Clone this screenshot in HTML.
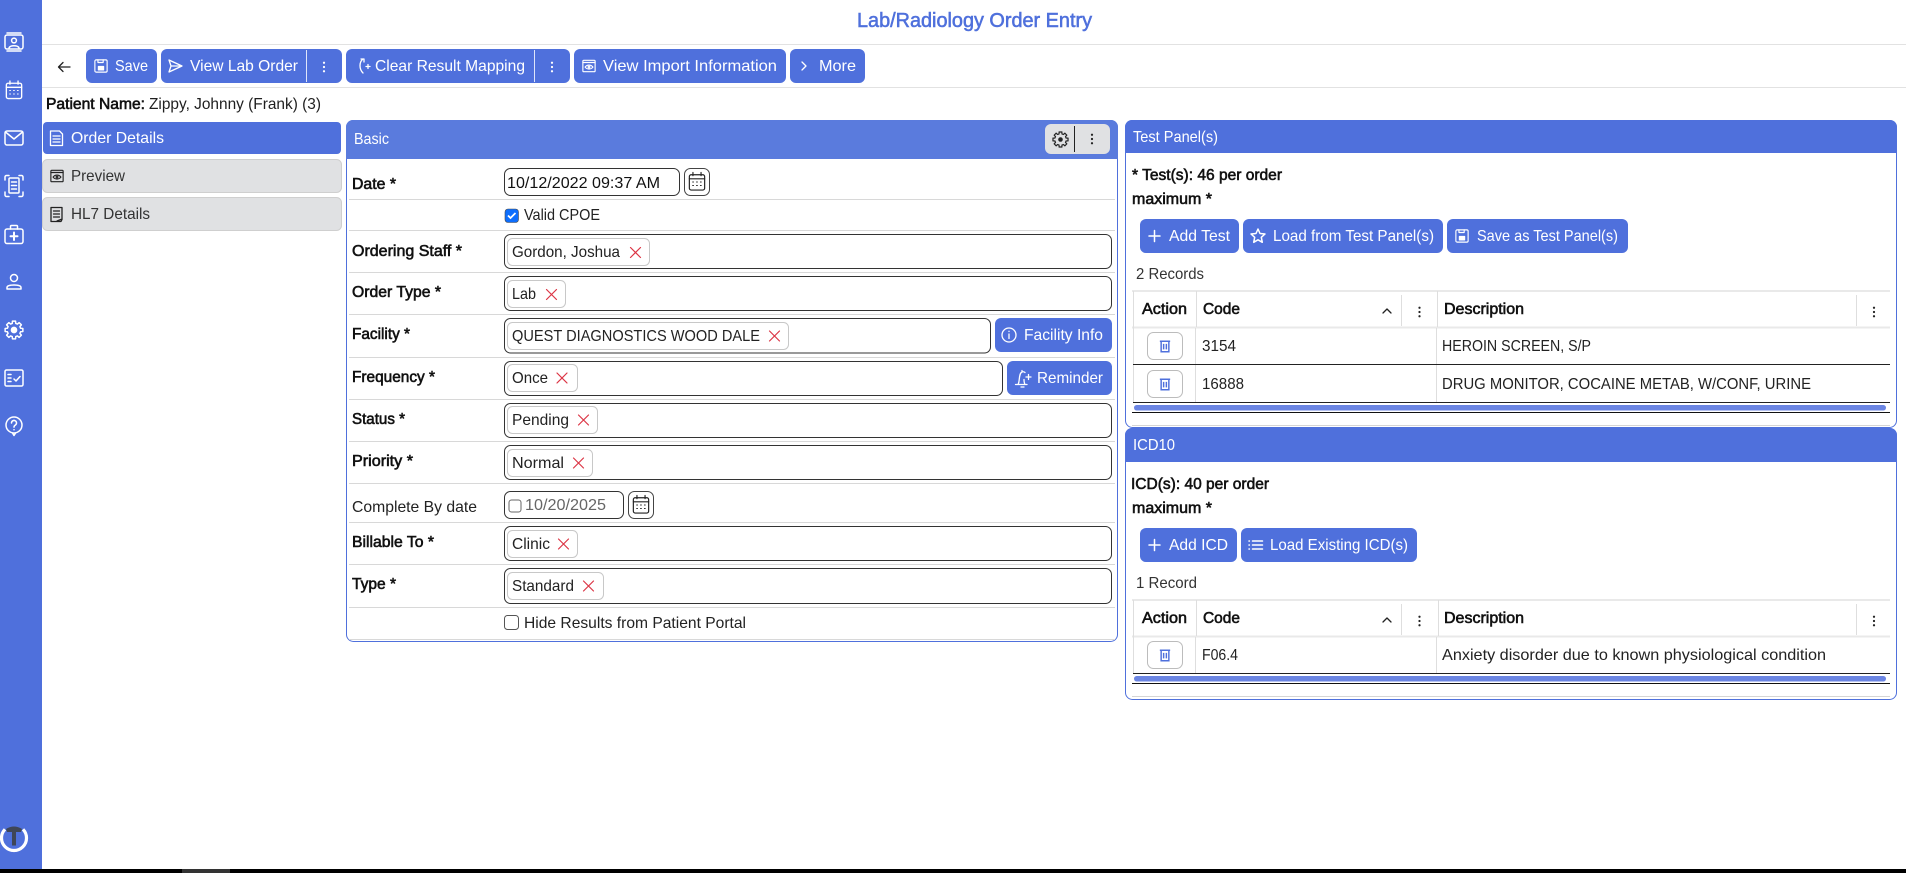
<!DOCTYPE html>
<html lang="en"><head><meta charset="utf-8"><title>Lab/Radiology Order Entry</title>
<style>
html,body{margin:0;padding:0;background:#fff;width:1906px;height:873px;overflow:hidden}
svg{display:block}
text{font-family:"Liberation Sans",Arial,sans-serif;font-size:16px;fill:#222}
.w{fill:#fff}
.b{fill:#111;stroke:#111;stroke-width:.6px}
.t{fill:#1f1f1f}
.g{fill:#333}
.ln{stroke:#d8d8d8;stroke-width:1}
.box{fill:#fff;stroke:#333;stroke-width:1}
.chip{fill:#fff;stroke:#c8c8c8;stroke-width:1}
.btn{fill:#4f70dc}
.ic{fill:none;stroke:#fff;stroke-width:1.3;stroke-linecap:round;stroke-linejoin:round}
.id{fill:none;stroke:#222;stroke-width:1.3;stroke-linecap:round;stroke-linejoin:round}
.x{stroke:#dc3545;stroke-width:1.2;stroke-linecap:round;fill:none}
</style></head><body>
<svg width="1906" height="873" viewBox="0 0 1906 873" xmlns="http://www.w3.org/2000/svg">
<defs>
<symbol id="gear" viewBox="-10 -10 20 20"><path d="M-1.76-6.57L-1.56-8.86 1.56-8.86 1.76-6.57 3.4-5.89 5.16-7.37 7.37-5.16 5.89-3.4 6.57-1.76 8.86-1.56 8.86 1.56 6.57 1.76 5.89 3.4 7.37 5.16 5.16 7.37 3.4 5.89 1.76 6.57 1.56 8.86-1.56 8.86-1.76 6.57-3.4 5.89-5.16 7.37-7.37 5.16-5.89 3.4-6.57 1.76-8.86 1.56-8.86-1.56-6.57-1.76-5.89-3.4-7.37-5.16-5.16-7.37-3.4-5.89Z"/></symbol>
<symbol id="cal" viewBox="0 0 20 22"><rect x="1.5" y="3.5" width="17" height="17" rx="2"/><path d="M1.5 8h17M5.5 1v3.5M14.5 1v3.5"/><path d="M5.2 11.500h.9M9.5 11.500h.9M13.800 11.500h.9M5.200 15.500h.9M9.500 15.500h.9M13.800 15.500h.9" stroke-width="1.100"/></symbol>
<symbol id="trash" viewBox="0 0 14 16"><path d="M1 2.5h12M2.500 2.500v12.200h9V2.500M5.400 5.500v6.500M8.600 5.500v6.500" fill="none" stroke="#4f70dc" stroke-width="1.700"/></symbol>
<symbol id="dots" viewBox="0 0 4 14"><circle cx="2" cy="2" r="1.300"/><circle cx="2" cy="7" r="1.300"/><circle cx="2" cy="12" r="1.300"/></symbol>
<symbol id="save" viewBox="0 0 16 16"><rect x="1" y="1" width="14" height="14" rx="1.500"/><path d="M4.500 1v3h6V1"/><rect x="5" y="8.500" width="6" height="4" fill="#fff"/></symbol>
<symbol id="eyebox" viewBox="0 0 16 16"><rect x="1" y="1.500" width="14" height="13" rx="1"/><path d="M1 4h14"/><path d="M3.500 9.200c2.400-3 6.600-3 9 0-2.400 3-6.600 3-9 0z"/><circle cx="8" cy="9.200" r="1"/></symbol>
</defs>

<!-- sidebar -->
<rect x="0" y="0" width="42" height="873" fill="#4f70dc"/>
<g class="ic" style="stroke-width:1.500">
<path d="M7 33h14M7 51h14"/><rect x="5" y="35" width="18" height="14" rx="2"/><circle cx="14" cy="40.500" r="2.400"/><path d="M9 48c1-3 9-3 10 0"/>
<use href="#cal" x="5" y="80" width="18" height="20"/>
<rect x="5" y="131" width="18" height="14" rx="2"/><path d="M5.500 132l8.500 7 8.500-7"/>
<path d="M5 180v-3a1.500 1.500 0 0 1 1.500-1.500H9M19 175.500h2.500A1.500 1.500 0 0 1 23 177v3M5 192v3a1.500 1.500 0 0 0 1.500 1.500H9M19 196.500h2.500A1.500 1.500 0 0 0 23 195v-3"/><rect x="9" y="178" width="10" height="15" rx="1"/><path d="M11.500 182h5M11.500 185.500h5M11.500 189h5"/>
<rect x="5" y="229" width="18" height="14.500" rx="2"/><path d="M10.500 229v-2.500a1 1 0 0 1 1-1h5a1 1 0 0 1 1 1v2.500"/><path d="M14 232.500v7.500M10.500 236.200h7" stroke-width="2"/>
<circle cx="14" cy="278" r="3.500"/><path d="M7 289v-1.500c0-2 3-2.500 7-2.500s7 .5 7 2.500v1.500z"/>
<use href="#gear" x="4" y="320" width="20" height="20"/>
<circle cx="14" cy="330" r="2.600" fill="#fff"/>
<rect x="5" y="370" width="18" height="16" rx="1.500"/><path d="M8 374.500h3M8 378h3M8 381.500h3M14 379l2 2 4-4.500"/>
<circle cx="14" cy="425" r="8"/><path d="M12.500 433l1.500 2.500 1.500-2.400"/><path d="M11.500 423a2.500 2.500 0 1 1 3.800 2.100c-1 .6-1.300 1-1.300 2"/><path d="M14 429.600v.2"/>
</g>
<!-- logo -->
<path d="M5 829.300A12.500 12.500 0 1 0 23 829.300" fill="none" stroke="#fff" stroke-width="3.200"/>
<path d="M6 829q8-5 16 0l-1 3h-5v13.500h-4V832H7z" fill="#3f4658"/>

<!-- bottom bar -->
<rect x="0" y="869" width="1906" height="4" fill="#000"/>
<rect x="182" y="869" width="48" height="4" fill="#333"/>

<!-- title & rules -->
<text x="857" y="27" textLength="235" lengthAdjust="spacingAndGlyphs" style="font-size:20px;fill:#4f70dc;stroke:#4f70dc;stroke-width:.55px">Lab/Radiology Order Entry</text>
<rect x="42" y="44" width="1864" height="1" fill="#e2e2e2"/>
<rect x="42" y="87" width="1864" height="1" fill="#e2e2e2"/>

<!-- toolbar -->
<path class="id" d="M59 67h11M63 62.500L58.500 67l4.500 4.500"/>
<rect class="btn" x="86" y="49" width="71" height="34" rx="6"/>
<use href="#save" x="94" y="59" width="14" height="14" class="ic"/>
<text class="w" x="115" y="71" textLength="33" lengthAdjust="spacingAndGlyphs">Save</text>
<rect class="btn" x="161" y="49" width="181" height="34" rx="6"/>
<path class="ic" d="M169 60l13 6-13 6 2-6zM171 66h11"/>
<text class="w" x="190" y="71" textLength="108" lengthAdjust="spacingAndGlyphs">View Lab Order</text>
<rect x="306" y="50" width="1" height="32" fill="#dfe5fa"/>
<use href="#dots" x="322" y="61" width="4" height="12" fill="#fff"/>
<rect class="btn" x="346" y="49" width="224" height="34" rx="6"/>
<path class="ic" d="M363 59c-4 3-4 10 0 14M361 59h3v3M366 66.500h4M368 64.500v4"/>
<text class="w" x="375" y="71" textLength="150" lengthAdjust="spacingAndGlyphs">Clear Result Mapping</text>
<rect x="534" y="50" width="1" height="32" fill="#dfe5fa"/>
<use href="#dots" x="550" y="61" width="4" height="12" fill="#fff"/>
<rect class="btn" x="574" y="49" width="212" height="34" rx="6"/>
<use href="#eyebox" x="582" y="59" width="14" height="14" class="ic"/>
<text class="w" x="603" y="71" textLength="174" lengthAdjust="spacingAndGlyphs">View Import Information</text>
<rect class="btn" x="790" y="49" width="75" height="34" rx="6"/>
<path class="ic" d="M802 62l4 4-4 4"/>
<text class="w" x="819" y="71" textLength="37" lengthAdjust="spacingAndGlyphs">More</text>

<!-- patient -->
<text class="b" x="46" y="109" textLength="99" lengthAdjust="spacingAndGlyphs">Patient Name:</text>
<text class="t" x="149" y="109" textLength="172" lengthAdjust="spacingAndGlyphs">Zippy, Johnny (Frank) (3)</text>

<!-- left tabs -->
<rect x="43" y="122" width="298" height="32" rx="4" fill="#4f70dc"/>
<g class="ic"><path d="M50.500 131h9l3 3v11.500h-12zM53 136h7M53 139h7M53 142h7"/></g>
<text class="w" x="71" y="143" textLength="93" lengthAdjust="spacingAndGlyphs">Order Details</text>
<rect x="42.500" y="159.500" width="299" height="33" rx="5" fill="#e0e1e3" stroke="#cfcfcf"/>
<use href="#eyebox" x="50" y="169" width="14" height="14" class="id"/>
<text class="g" x="71" y="181" textLength="54" lengthAdjust="spacingAndGlyphs">Preview</text>
<rect x="42.500" y="197.500" width="299" height="33" rx="5" fill="#e0e1e3" stroke="#cfcfcf"/>
<path class="id" d="M51 207.500h11v12l-1 2h-10zM53.500 211h6M53.500 214h6M53.500 217h6M57 221l5-2"/>
<text class="g" x="71" y="219" textLength="79" lengthAdjust="spacingAndGlyphs">HL7 Details</text>

<!-- Basic panel -->
<rect x="346.500" y="120.500" width="771" height="521" rx="7" fill="#fff" stroke="#4f70dc"/>
<path d="M346 159v-32a7 7 0 0 1 7-7h758a7 7 0 0 1 7 7v32z" fill="#5a7bdd"/>
<text class="w" x="354" y="144" textLength="35" lengthAdjust="spacingAndGlyphs">Basic</text>
<rect x="1045" y="124" width="65" height="30" rx="6" fill="#e0e1e3"/>
<use href="#gear" x="1052" y="131" width="17" height="17" fill="none" stroke="#222" stroke-width="1.400"/>
<circle cx="1060.500" cy="139.500" r="2.300" fill="#222"/>
<rect x="1074" y="126" width="1" height="26" fill="#222"/>
<use href="#dots" x="1090" y="133" width="4" height="12" fill="#222"/>
<g class="ln">
<path d="M349 199.500h766M349 230.500h766M349 272.500h766M349 314.500h766M349 357.500h766M349 399.500h766M349 441.500h766M349 483.500h766M349 522.500h766M349 564.500h766M349 607.500h766M349 639.500h766"/>
</g>

<text class="b" x="352" y="189" textLength="44" lengthAdjust="spacingAndGlyphs">Date *</text>
<rect class="box" x="504.500" y="168.500" width="175" height="27" rx="6"/>
<text x="507" y="188" textLength="153" lengthAdjust="spacingAndGlyphs" style="fill:#111">10/12/2022 09:37 AM</text>
<rect x="684.500" y="168.500" width="25" height="27" rx="6" fill="#fff" stroke="#444"/>
<use href="#cal" x="688" y="171" width="18" height="21" class="id"/>

<rect x="505" y="209" width="13.500" height="13.500" rx="3" fill="#0d6efd" stroke="#4a4a4a" stroke-width=".6"/>
<path d="M508 215.500l2.500 2.500 5-5" fill="none" stroke="#fff" stroke-width="1.700"/>
<text x="524" y="220" textLength="76" lengthAdjust="spacingAndGlyphs">Valid CPOE</text>

<text class="b" x="352" y="256" textLength="110" lengthAdjust="spacingAndGlyphs">Ordering Staff *</text>
<rect class="box" x="504.500" y="234.500" width="607" height="34" rx="6"/>
<rect class="chip" x="507.500" y="238.500" width="142" height="27" rx="5"/>
<text x="512" y="257" textLength="108" lengthAdjust="spacingAndGlyphs">Gordon, Joshua</text>
<path class="x" d="M630.500 247.500l10 10M640.500 247.500l-10 10"/>

<text class="b" x="352" y="297" textLength="89" lengthAdjust="spacingAndGlyphs">Order Type *</text>
<rect class="box" x="504.500" y="276.500" width="607" height="34" rx="6"/>
<rect class="chip" x="507.500" y="280.500" width="58" height="27" rx="5"/>
<text x="512" y="299" textLength="24" lengthAdjust="spacingAndGlyphs">Lab</text>
<path class="x" d="M546.500 289.500l10 10M556.500 289.500l-10 10"/>

<text class="b" x="352" y="339" textLength="58" lengthAdjust="spacingAndGlyphs">Facility *</text>
<rect class="box" x="504.500" y="318.500" width="486" height="34.500" rx="6"/>
<rect class="chip" x="507.500" y="322.500" width="281" height="27" rx="5"/>
<text x="512" y="341" textLength="248" lengthAdjust="spacingAndGlyphs">QUEST DIAGNOSTICS WOOD DALE</text>
<path class="x" d="M769.500 331l10 10M779.500 331l-10 10"/>
<rect class="btn" x="995" y="318" width="117" height="34" rx="6"/>
<circle class="ic" cx="1009" cy="335" r="7"/><path class="ic" d="M1009 334v4.500M1009 331.300v.2"/>
<text class="w" x="1024" y="340" textLength="79" lengthAdjust="spacingAndGlyphs">Facility Info</text>

<text class="b" x="352" y="382" textLength="83" lengthAdjust="spacingAndGlyphs">Frequency *</text>
<rect class="box" x="504.500" y="361.500" width="498" height="34" rx="6"/>
<rect class="chip" x="507.500" y="364.500" width="70" height="27" rx="5"/>
<text x="512" y="383" textLength="36" lengthAdjust="spacingAndGlyphs">Once</text>
<path class="x" d="M557 373l10 10M567 373l-10 10"/>
<rect class="btn" x="1007" y="361" width="105" height="34" rx="6"/>
<path class="ic" d="M1015.500 384.500h11.500M1018 384.500c2-3 .5-11 4-12.500 1-.4 2-.4 3 .5M1025 384.500c-.8-1.500-1-3-1-5M1021 387h3M1022 372v-1.500M1026 377h5M1028.500 374.500v5"/>
<text class="w" x="1037" y="383" textLength="66" lengthAdjust="spacingAndGlyphs">Reminder</text>

<text class="b" x="352" y="424" textLength="53" lengthAdjust="spacingAndGlyphs">Status *</text>
<rect class="box" x="504.500" y="403.500" width="607" height="34" rx="6"/>
<rect class="chip" x="507.500" y="406.500" width="90" height="27" rx="5"/>
<text x="512" y="425" textLength="57" lengthAdjust="spacingAndGlyphs">Pending</text>
<path class="x" d="M578.500 415l10 10M588.500 415l-10 10"/>

<text class="b" x="352" y="466" textLength="61" lengthAdjust="spacingAndGlyphs">Priority *</text>
<rect class="box" x="504.500" y="445.500" width="607" height="34" rx="6"/>
<rect class="chip" x="507.500" y="449.500" width="85" height="27" rx="5"/>
<text x="512" y="468" textLength="52" lengthAdjust="spacingAndGlyphs">Normal</text>
<path class="x" d="M573.500 458l10 10M583.500 458l-10 10"/>

<text x="352" y="512" textLength="125" lengthAdjust="spacingAndGlyphs">Complete By date</text>
<rect class="box" x="504.500" y="491.500" width="119" height="27" rx="6"/>
<rect x="509" y="500" width="12" height="12" rx="2.500" fill="#fff" stroke="#666"/>
<text x="525" y="510" textLength="81" lengthAdjust="spacingAndGlyphs" style="fill:#666">10/20/2025</text>
<rect x="628.500" y="491.500" width="25" height="27" rx="6" fill="#fff" stroke="#444"/>
<use href="#cal" x="632" y="494" width="18" height="21" class="id"/>

<text class="b" x="352" y="547" textLength="82" lengthAdjust="spacingAndGlyphs">Billable To *</text>
<rect class="box" x="504.500" y="526.500" width="607" height="34" rx="6"/>
<rect class="chip" x="507.500" y="530.500" width="70" height="27" rx="5"/>
<text x="512" y="549" textLength="38" lengthAdjust="spacingAndGlyphs">Clinic</text>
<path class="x" d="M558.500 539l10 10M568.500 539l-10 10"/>

<text class="b" x="352" y="589" textLength="44" lengthAdjust="spacingAndGlyphs">Type *</text>
<rect class="box" x="504.500" y="568.500" width="607" height="35" rx="6"/>
<rect class="chip" x="507.500" y="572.500" width="96" height="27" rx="5"/>
<text x="512" y="591" textLength="62" lengthAdjust="spacingAndGlyphs">Standard</text>
<path class="x" d="M583.500 581l10 10M593.500 581l-10 10"/>

<rect x="504.500" y="615.500" width="14" height="14" rx="3" fill="#fff" stroke="#555"/>
<text x="524" y="628" textLength="222" lengthAdjust="spacingAndGlyphs">Hide Results from Patient Portal</text>

<!-- Test Panel -->
<rect x="1125.500" y="120.500" width="771" height="307" rx="7" fill="#fff" stroke="#4f70dc"/>
<path d="M1125 153v-26a7 7 0 0 1 7-7h758a7 7 0 0 1 7 7v26z" fill="#4f70dc"/>
<rect x="1132" y="425" width="758" height="1" fill="#d5d5d5"/>
<text class="w" x="1133" y="142" textLength="85" lengthAdjust="spacingAndGlyphs">Test Panel(s)</text>
<text class="b" x="1132" y="180" textLength="150" lengthAdjust="spacingAndGlyphs">* Test(s): 46 per order</text>
<text class="b" x="1132" y="204" textLength="80" lengthAdjust="spacingAndGlyphs">maximum *</text>
<rect class="btn" x="1140" y="219" width="99" height="34" rx="6"/>
<path class="ic" style="stroke-width:1.500" d="M1149 236h11M1154.500 230.500v11"/>
<text class="w" x="1169" y="241" textLength="61" lengthAdjust="spacingAndGlyphs">Add Test</text>
<rect class="btn" x="1243" y="219" width="200" height="34" rx="6"/>
<path class="ic" style="stroke-width:1.500" d="M1258 229l2 4.500 5 .5-3.700 3.300 1 5-4.300-2.500-4.300 2.500 1-5-3.700-3.300 5-.5z"/>
<text class="w" x="1273" y="241" textLength="161" lengthAdjust="spacingAndGlyphs">Load from Test Panel(s)</text>
<rect class="btn" x="1447" y="219" width="181" height="34" rx="6"/>
<use href="#save" x="1455" y="229" width="14" height="14" class="ic"/>
<text class="w" x="1477" y="241" textLength="141" lengthAdjust="spacingAndGlyphs">Save as Test Panel(s)</text>
<text class="g" x="1136" y="279" textLength="68" lengthAdjust="spacingAndGlyphs">2 Records</text>

<path d="M1132 291h758M1132 327.500h758" stroke="#e9e9e9" stroke-width="2" fill="none"/>
<path d="M1133.500 291v112M1196.500 291v36M1195.500 328v74M1401.500 295v31M1437.500 291v36M1436.500 328v74M1856.500 295v31" stroke="#dedede" fill="none"/>
<text class="b" x="1142" y="314" textLength="45" lengthAdjust="spacingAndGlyphs">Action</text>
<text class="b" x="1203" y="314" textLength="37" lengthAdjust="spacingAndGlyphs">Code</text>
<path class="id" d="M1383 313l4-4 4 4"/>
<use href="#dots" x="1417.500" y="306" width="4" height="12" fill="#222"/>
<text class="b" x="1444" y="314" textLength="80" lengthAdjust="spacingAndGlyphs">Description</text>
<use href="#dots" x="1872" y="306" width="4" height="12" fill="#222"/>
<rect x="1147.500" y="332.500" width="35" height="27" rx="6" fill="#fff" stroke="#bcbcbc"/>
<use href="#trash" x="1159" y="339" width="12" height="14"/>
<text x="1202" y="351" textLength="34" lengthAdjust="spacingAndGlyphs">3154</text>
<text x="1442" y="351" textLength="149" lengthAdjust="spacingAndGlyphs">HEROIN SCREEN, S/P</text>
<rect x="1133" y="364" width="757" height="1" fill="#222"/>
<rect x="1147.500" y="370.500" width="35" height="27" rx="6" fill="#fff" stroke="#bcbcbc"/>
<use href="#trash" x="1159" y="377" width="12" height="14"/>
<text x="1202" y="389" textLength="42" lengthAdjust="spacingAndGlyphs">16888</text>
<text x="1442" y="389" textLength="369" lengthAdjust="spacingAndGlyphs">DRUG MONITOR, COCAINE METAB, W/CONF, URINE</text>
<rect x="1133" y="402" width="757" height="1" fill="#222"/>
<rect x="1134" y="405" width="752" height="5.500" rx="2.700" fill="#6b85e3"/>
<rect x="1132" y="412" width="758" height="1" fill="#111"/>

<!-- ICD10 -->
<rect x="1125.500" y="428.500" width="771" height="271" rx="7" fill="#fff" stroke="#4f70dc"/>
<path d="M1125 462v-27a7 7 0 0 1 7-7h758a7 7 0 0 1 7 7v27z" fill="#4f70dc"/>
<rect x="1132" y="696" width="758" height="1" fill="#d5d5d5"/>
<text class="w" x="1133" y="450" textLength="42" lengthAdjust="spacingAndGlyphs">ICD10</text>
<text class="b" x="1131" y="489" textLength="138" lengthAdjust="spacingAndGlyphs">ICD(s): 40 per order</text>
<text class="b" x="1132" y="513" textLength="80" lengthAdjust="spacingAndGlyphs">maximum *</text>
<rect class="btn" x="1140" y="528" width="97" height="34" rx="6"/>
<path class="ic" style="stroke-width:1.500" d="M1149 545h11M1154.500 539.500v11"/>
<text class="w" x="1169" y="550" textLength="59" lengthAdjust="spacingAndGlyphs">Add ICD</text>
<rect class="btn" x="1241" y="528" width="176" height="34" rx="6"/>
<path class="ic" style="stroke-width:1.500" d="M1249 541h.4M1249 545h.4M1249 549h.4M1252.500 541h10M1252.500 545h10M1252.500 549h10"/>
<text class="w" x="1270" y="550" textLength="138" lengthAdjust="spacingAndGlyphs">Load Existing ICD(s)</text>
<text class="g" x="1136" y="588" textLength="61" lengthAdjust="spacingAndGlyphs">1 Record</text>

<path d="M1132 600h758M1132 636.500h758" stroke="#e9e9e9" stroke-width="2" fill="none"/>
<path d="M1133.500 600v74M1196.500 600v36M1195.500 637v37M1401.500 604v31M1438.500 600v36M1436.500 637v37M1856.500 604v31" stroke="#dedede" fill="none"/>
<text class="b" x="1142" y="623" textLength="45" lengthAdjust="spacingAndGlyphs">Action</text>
<text class="b" x="1203" y="623" textLength="37" lengthAdjust="spacingAndGlyphs">Code</text>
<path class="id" d="M1383 622l4-4 4 4"/>
<use href="#dots" x="1417.500" y="615" width="4" height="12" fill="#222"/>
<text class="b" x="1444" y="623" textLength="80" lengthAdjust="spacingAndGlyphs">Description</text>
<use href="#dots" x="1872" y="615" width="4" height="12" fill="#222"/>
<rect x="1147.500" y="641.500" width="35" height="27" rx="6" fill="#fff" stroke="#bcbcbc"/>
<use href="#trash" x="1159" y="648" width="12" height="14"/>
<text x="1202" y="660" textLength="36" lengthAdjust="spacingAndGlyphs">F06.4</text>
<text x="1442" y="660" textLength="384" lengthAdjust="spacingAndGlyphs">Anxiety disorder due to known physiological condition</text>
<rect x="1133" y="673" width="757" height="1" fill="#222"/>
<rect x="1134" y="676" width="752" height="5.500" rx="2.700" fill="#6b85e3"/>
<rect x="1132" y="683" width="758" height="1" fill="#111"/>
</svg>
</body></html>
